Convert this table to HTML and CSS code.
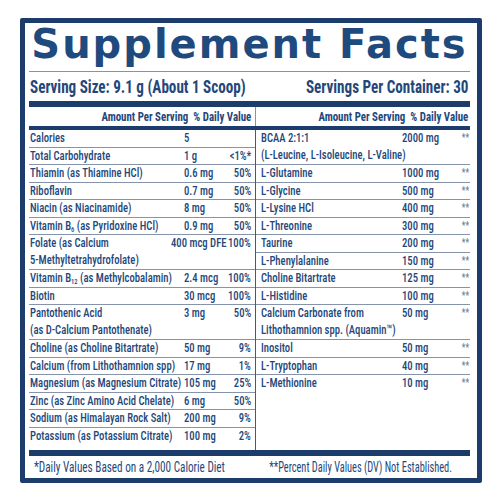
FILE: index.html
```html
<!DOCTYPE html>
<html lang="en">
<head>
  <meta charset="UTF-8">
  <title>Supplement Facts</title>
  <link rel="stylesheet" href="styles.css">
</head>
<body>
  <div class="label">
    <h1 class="titulo">Supplement Facts</h1>
    <div class="porcao">
      <div class="lado"><span class="esq">Serving Size: 9.1 g (About 1 Scoop)</span></div>
      <div class="lado fim"><span class="dir">Servings Per Container: 30</span></div>
    </div>

    <div class="cabecalho">
      <div class="cab-col"><span class="dir">Amount Per Serving&nbsp; % Daily Value</span></div>
      <div class="cab-col"><span class="dir">Amount Per Serving&nbsp; % Daily Value</span></div>
    </div>

    <div class="tabela">
      <!-- coluna esquerda -->
      <div class="coluna esquerda">
        <div class="linha"><span class="nome">Calories</span><span class="qtd">5</span><span class="vd"></span></div>
        <div class="linha"><span class="nome">Total Carbohydrate</span><span class="qtd">1 g</span><span class="vd">&lt;1%*</span></div>
        <div class="linha"><span class="nome">Thiamin (as Thiamine HCl)</span><span class="qtd">0.6 mg</span><span class="vd">50%</span></div>
        <div class="linha"><span class="nome">Riboflavin</span><span class="qtd">0.7 mg</span><span class="vd">50%</span></div>
        <div class="linha"><span class="nome">Niacin (as Niacinamide)</span><span class="qtd">8 mg</span><span class="vd">50%</span></div>
        <div class="linha"><span class="nome">Vitamin B<sub>6</sub> (as Pyridoxine HCl)</span><span class="qtd">0.9 mg</span><span class="vd">50%</span></div>
        <div class="linha dupla larga"><span class="nome">Folate (as Calcium<br>5-Methyltetrahydrofolate)</span><span class="qtd">400 mcg DFE</span><span class="vd">100%</span></div>
        <div class="linha"><span class="nome">Vitamin B<sub>12</sub> (as Methylcobalamin)</span><span class="qtd">2.4 mcg</span><span class="vd">100%</span></div>
        <div class="linha"><span class="nome">Biotin</span><span class="qtd">30 mcg</span><span class="vd">100%</span></div>
        <div class="linha dupla"><span class="nome">Pantothenic Acid<br>(as D-Calcium Pantothenate)</span><span class="qtd">3 mg</span><span class="vd">50%</span></div>
        <div class="linha"><span class="nome">Choline (as Choline Bitartrate)</span><span class="qtd">50 mg</span><span class="vd">9%</span></div>
        <div class="linha"><span class="nome">Calcium (from Lithothamnion spp)</span><span class="qtd">17 mg</span><span class="vd">1%</span></div>
        <div class="linha"><span class="nome">Magnesium (as Magnesium Citrate)</span><span class="qtd">105 mg</span><span class="vd">25%</span></div>
        <div class="linha"><span class="nome">Zinc (as Zinc Amino Acid Chelate)</span><span class="qtd">6 mg</span><span class="vd">50%</span></div>
        <div class="linha"><span class="nome">Sodium (as Himalayan Rock Salt)</span><span class="qtd">200 mg</span><span class="vd">9%</span></div>
        <div class="linha"><span class="nome">Potassium (as Potassium Citrate)</span><span class="qtd">100 mg</span><span class="vd">2%</span></div>
      </div>

      <!-- coluna direita -->
      <div class="coluna direita">
        <div class="linha dupla"><span class="nome">BCAA 2:1:1<br>(L-Leucine, L-Isoleucine, L-Valine)</span><span class="qtd">2000 mg</span><span class="vd">**</span></div>
        <div class="linha"><span class="nome">L-Glutamine</span><span class="qtd">1000 mg</span><span class="vd">**</span></div>
        <div class="linha"><span class="nome">L-Glycine</span><span class="qtd">500 mg</span><span class="vd">**</span></div>
        <div class="linha"><span class="nome">L-Lysine HCl</span><span class="qtd">400 mg</span><span class="vd">**</span></div>
        <div class="linha"><span class="nome">L-Threonine</span><span class="qtd">300 mg</span><span class="vd">**</span></div>
        <div class="linha"><span class="nome">Taurine</span><span class="qtd">200 mg</span><span class="vd">**</span></div>
        <div class="linha"><span class="nome">L-Phenylalanine</span><span class="qtd">150 mg</span><span class="vd">**</span></div>
        <div class="linha"><span class="nome">Choline Bitartrate</span><span class="qtd">125 mg</span><span class="vd">**</span></div>
        <div class="linha"><span class="nome">L-Histidine</span><span class="qtd">100 mg</span><span class="vd">**</span></div>
        <div class="linha dupla"><span class="nome">Calcium Carbonate from<br>Lithothamnion spp. (Aquamin™)</span><span class="qtd">50 mg</span><span class="vd">**</span></div>
        <div class="linha"><span class="nome">Inositol</span><span class="qtd">50 mg</span><span class="vd">**</span></div>
        <div class="linha"><span class="nome">L-Tryptophan</span><span class="qtd">40 mg</span><span class="vd">**</span></div>
        <div class="linha"><span class="nome">L-Methionine</span><span class="qtd">10 mg</span><span class="vd">**</span></div>
      </div>
    </div>

    <div class="rodape">
      <div class="lado"><span class="esq">*Daily Values Based on a 2,000 Calorie Diet</span></div>
      <div class="lado fim"><span class="dir">**Percent Daily Values (DV) Not Established.</span></div>
    </div>
  </div>
</body>
</html>
```

FILE: styles.css
```css
:root {
  --azul-escuro: #1c3d6b;
  --azul-texto: #24477a;
  --azul-titulo: #1f4a7e;
  --cinza-linha: #8594aa;
  --aperto: 0.82; /* fonte condensada mais estreita que a Roboto Condensed */
}

body {
  margin: 0;
  background: #fff;
  font-family: "Roboto Condensed", "Roboto", sans-serif;
  color: var(--azul-texto);
}

.label {
  margin: 18px 0 0 20px;
  width: 462px;
  height: 465px;
  box-sizing: border-box;
  border: 5px solid var(--azul-escuro);
  border-radius: 2px;
  padding: 0 7px 0 4px;
  display: flex;
  flex-direction: column;
}

.titulo {
  margin: 0;
  height: 48px;
  font-family: "DejaVu Sans", sans-serif;
  font-weight: bold;
  font-size: 40px;
  line-height: 43px;
  letter-spacing: 2px;
  white-space: nowrap;
  text-align: center;
  color: var(--azul-titulo);
  border-bottom: 1px solid var(--cinza-linha);
}

/* texto estreito */
.esq, .dir, .nome, .qtd, .vd {
  display: inline-block;
  white-space: nowrap;
  transform: scaleX(var(--aperto));
}

.esq, .nome, .qtd {
  transform-origin: left top;
}

.dir, .vd {
  transform-origin: right top;
}

.lado {
  display: flex;
  min-width: 0;
}

.lado.fim {
  justify-content: flex-end;
}

.porcao {
  --aperto: 0.84;
  height: 29px;
  display: grid;
  grid-template-columns: minmax(0, 1fr) minmax(0, 1fr);
  align-items: center;
  font-size: 18px;
  font-weight: bold;
  padding: 0 2px 0 1px;
  border-bottom: 6px solid var(--azul-escuro);
}

.cabecalho {
  --aperto: 0.87;
  display: grid;
  grid-template-columns: 227px minmax(0, 1fr);
  height: 19px;
  border-bottom: 4px solid var(--azul-escuro);
}

.cab-col {
  display: flex;
  justify-content: flex-end;
  font-size: 12.5px;
  font-weight: bold;
  line-height: 19px;
  padding-right: 2px;
}

.cab-col:first-child {
  padding-right: 4px;
  border-right: 1.5px solid var(--cinza-linha);
}

.tabela {
  flex: 1;
  display: grid;
  grid-template-columns: 227px minmax(0, 1fr);
}

.coluna {
  display: flex;
  flex-direction: column;
}

.esquerda {
  border-right: 1.5px solid #3d5b86;
}

.linha {
  display: grid;
  height: 17.5px;
  box-sizing: border-box;
  font-size: 13px;
  font-weight: 500;
  line-height: 16.5px;
  border-bottom: 1px solid var(--cinza-linha);
}

.linha:last-child {
  border-bottom: none;
}

.linha.dupla {
  height: 35px;
}

.esquerda .linha {
  grid-template-columns: 154px minmax(0, 1fr) auto;
  padding: 0 4px 0 1px;
}

.esquerda .linha.larga {
  grid-template-columns: 141px minmax(0, 1fr) auto;
}

.direita .linha {
  grid-template-columns: 141px minmax(0, 1fr) auto;
  padding: 0 0 0 4.5px;
}

.direita .vd {
  font-size: 10px;
  color: #6f7f96;
  padding-right: 1px;
}

sub {
  font-size: 8px;
  vertical-align: -2px;
  line-height: 0;
}

.rodape {
  --aperto: 0.8;
  height: 22px;
  display: grid;
  grid-template-columns: minmax(0, 1fr) minmax(0, 1fr);
  align-items: center;
  padding: 0 18px 0 5px;
  font-size: 14px;
  border-top: 6px solid var(--azul-escuro);
}

.rodape .dir {
  --aperto: 0.74;
}
```
